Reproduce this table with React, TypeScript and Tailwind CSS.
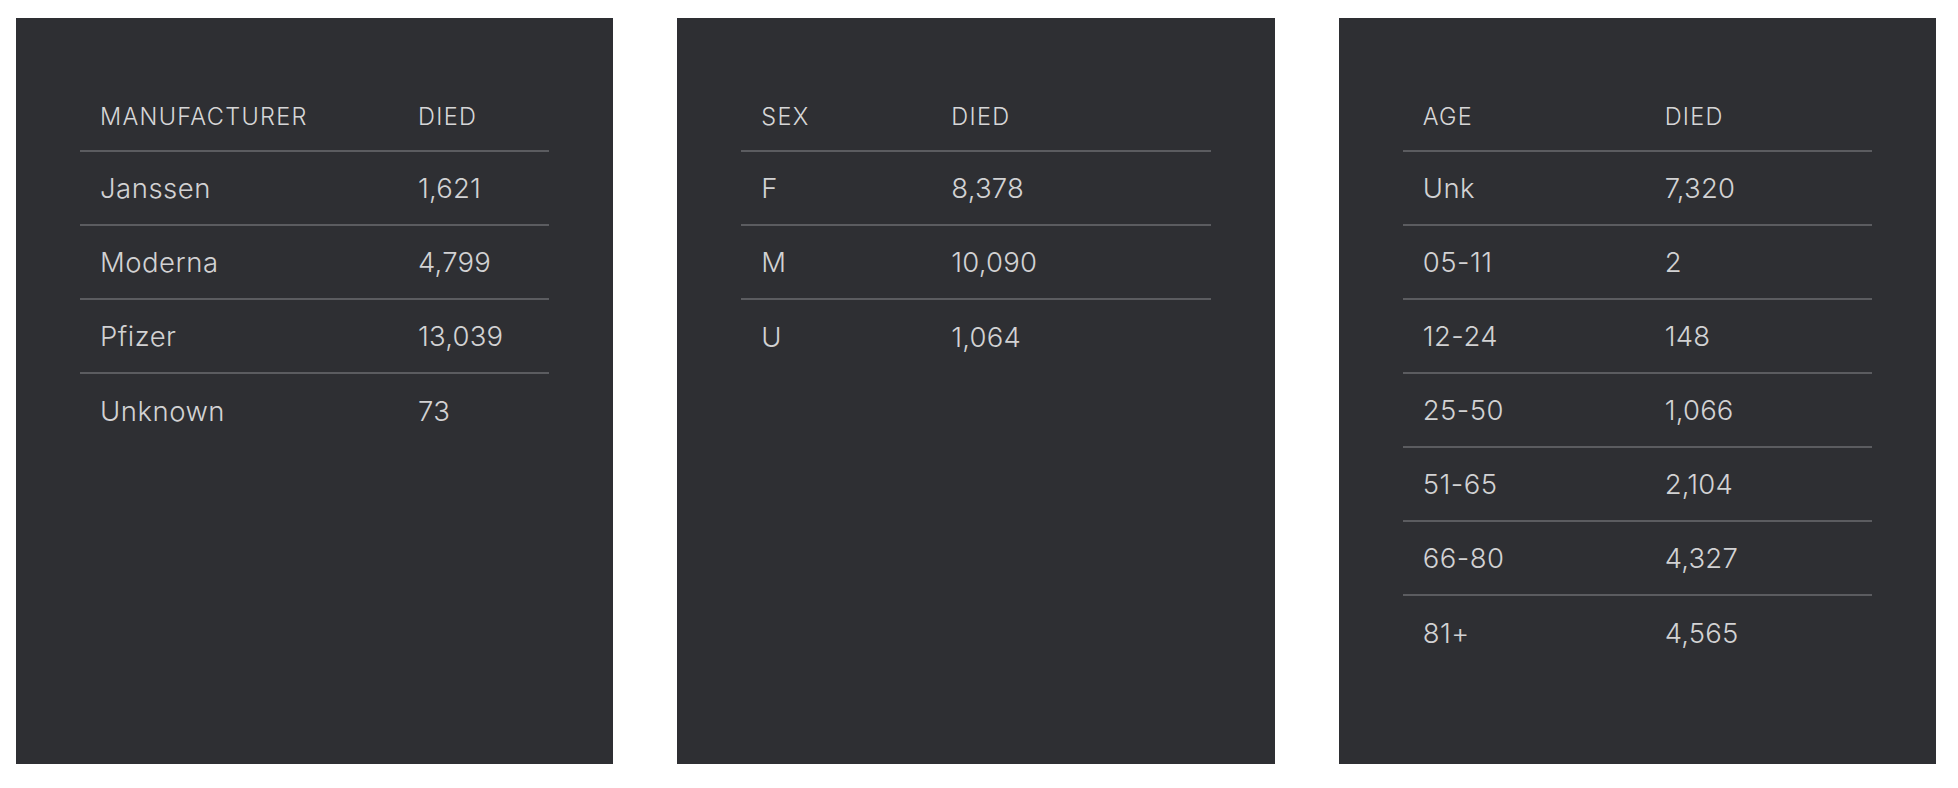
import React from 'react';

type Row = { label: string; died: string };

type TableData = {
   heading: string;
   firstCol: string;
   rows: Row[];
};

const tables: TableData[] = [
   {
      heading: 'Manufacturer',
      firstCol: 'w-[318px]',
      rows: [
         { label: 'Janssen', died: '1,621' },
         { label: 'Moderna', died: '4,799' },
         { label: 'Pfizer', died: '13,039' },
         { label: 'Unknown', died: '73' },
      ],
   },
   {
      heading: 'Sex',
      firstCol: 'w-[190px]',
      rows: [
         { label: 'F', died: '8,378' },
         { label: 'M', died: '10,090' },
         { label: 'U', died: '1,064' },
      ],
   },
   {
      heading: 'Age',
      firstCol: 'w-[242px]',
      rows: [
         { label: 'Unk', died: '7,320' },
         { label: '05-11', died: '2' },
         { label: '12-24', died: '148' },
         { label: '25-50', died: '1,066' },
         { label: '51-65', died: '2,104' },
         { label: '66-80', died: '4,327' },
         { label: '81+', died: '4,565' },
      ],
   },
];

function DeathTable({ data }: { data: TableData }) {
   return (
      <div className="bg-[#2e2f33] p-16 h-[746px]">
         <table className="w-full border-collapse table-fixed">
            <colgroup>
               <col className={data.firstCol} />
               <col />
            </colgroup>
            <thead>
               <tr className="h-[69px] border-b-2 border-[#5b5c60]">
                  <th className="text-left font-light uppercase text-[23.5px] tracking-[1.3px] text-[#d6d6d7] pl-5 pt-[2px] align-middle">{data.heading}</th>
                  <th className="text-left font-light uppercase text-[23.5px] tracking-[1.3px] text-[#d6d6d7] pl-5 pt-[2px] align-middle">Died</th>
               </tr>
            </thead>
            <tbody>
               {data.rows.map((row, i) => (
                  <tr key={row.label} className={i < data.rows.length - 1 ? 'h-[74px] border-b-2 border-[#5b5c60]' : 'h-[74px]'}>
                     <td className="pl-5 pt-[2px] font-light text-[27.5px] tracking-[0.5px] text-[#d2d2d3] align-middle">{row.label}</td>
                     <td className="pl-5 pt-[2px] font-light text-[27.5px] tracking-[0.2px] text-[#d2d2d3] align-middle">{row.died}</td>
                  </tr>
               ))}
            </tbody>
         </table>
      </div>
   );
}

export default function App() {
   return (
      <div className="w-[1958px] h-[788px] bg-white pt-[18px] pl-4" style={{ fontFamily: 'Inter, "Noto Sans", sans-serif' }}>
         <div className="w-[1920px] grid grid-cols-3 gap-16">
            {tables.map((t) => (
               <DeathTable key={t.heading} data={t} />
            ))}
         </div>
      </div>
   );
}
